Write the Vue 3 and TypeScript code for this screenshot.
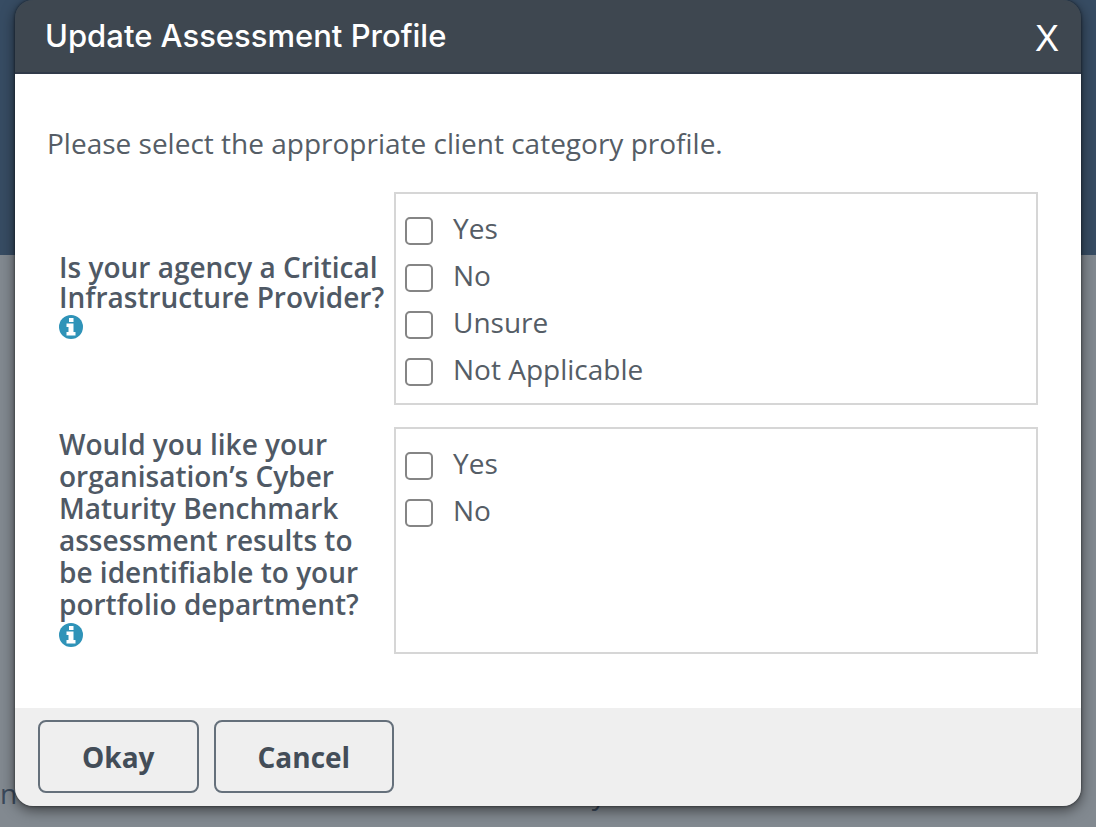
<script setup lang="ts">
import { reactive } from 'vue'

interface Question {
  id: string
  label: string
  options: string[]
  tight: boolean
}

const questions: Question[] = [
  {
    id: 'infrastructure',
    label: 'Is your agency a Critical Infrastructure Provider?',
    options: ['Yes', 'No', 'Unsure', 'Not Applicable'],
    tight: true,
  },
  {
    id: 'identifiable',
    label:
      'Would you like your organisation’s Cyber Maturity Benchmark assessment results to be identifiable to your portfolio department?',
    options: ['Yes', 'No'],
    tight: false,
  },
]

const answers = reactive<Record<string, string[]>>({
  infrastructure: [],
  identifiable: [],
})
</script>

<template>
  <div class="page">
    <div class="banner"></div>
    <p class="page-text"><span>n</span><span>y</span></p>

    <form class="dialog" role="dialog" aria-labelledby="dialog-title" @submit.prevent>
      <header class="head">
        <h1 id="dialog-title" class="title">Update Assessment Profile</h1>
        <button type="button" class="close">X</button>
      </header>

      <main class="body">
        <p class="intro">Please select the appropriate client category profile.</p>
        <div class="questions">
          <div
            v-for="q in questions"
            :key="q.id"
            class="question"
            role="group"
            :aria-labelledby="`label-${q.id}`"
          >
            <div class="prompt" :class="{ tight: q.tight }">
              <span :id="`label-${q.id}`">{{ q.label }}</span>
              <button type="button" class="info" :aria-describedby="`label-${q.id}`">
                <svg viewBox="0 0 24 24" width="24" height="24" aria-hidden="true">
                  <circle cx="12" cy="12" r="12" fill="#2f93b8" />
                  <path
                    d="M10 3h4.5v4H10zM7.5 8.5h7V17h2v3.5h-9V17h2v-5h-2z"
                    fill="#fff"
                  />
                </svg>
              </button>
            </div>
            <div class="options">
              <label v-for="option in q.options" :key="option" class="option">
                <input v-model="answers[q.id]" type="checkbox" :value="option" class="check" />
                <span>{{ option }}</span>
              </label>
            </div>
          </div>
        </div>
      </main>

      <footer class="foot">
        <button type="submit" class="action">Okay</button>
        <button type="button" class="action">Cancel</button>
      </footer>
    </form>
  </div>
</template>

<style>
body {
  margin: 0;
  background: #828990;
}
</style>

<style scoped>
.page {
  position: relative;
  box-sizing: border-box;
  min-height: 100vh;
  padding: 0 15px 20px;
  overflow: hidden;
  background: #828990;
  font-family: 'Open Sans', 'Noto Sans', sans-serif;
  font-size: 28px;
  color: #555d66;
}
.banner {
  position: absolute;
  inset: 0 0 auto;
  height: 255px;
  background: #374c63;
}
.page-text {
  position: absolute;
  left: 0;
  right: 0;
  bottom: 15px;
  display: grid;
  grid-template-columns: 54% 1fr;
  margin: 0;
  line-height: 38px;
  color: #3a485a;
}
.dialog {
  position: relative;
  overflow: hidden;
  border-radius: 18px;
  box-shadow: 0 4px 14px rgba(0, 0, 0, 0.55), 0 0 3px rgba(0, 0, 0, 0.6);
}
.head {
  display: flex;
  align-items: center;
  justify-content: space-between;
  box-sizing: border-box;
  height: 74px;
  padding: 0 22px 0 30px;
  border-bottom: 2px solid #313a49;
  background: #3e4750;
  color: #fff;
}
.title {
  margin: 0;
  font-family: Inter, 'Open Sans', sans-serif;
  font-size: 31px;
  font-weight: 500;
  line-height: 40px;
}
.close {
  padding: 6px 0 0;
  border: 0;
  background: none;
  color: #fff;
  font-family: 'Liberation Sans', Arial, sans-serif;
  font-size: 36px;
  line-height: 40px;
}
.body {
  padding: 50px 43px 54px 32px;
  background: #fff;
}
.intro {
  margin: 0 0 30px;
  line-height: 38px;
}
.questions {
  display: flex;
  flex-direction: column;
  gap: 22px;
  padding-left: 12px;
}
.question {
  display: grid;
  grid-template-columns: 335px 1fr;
}
.prompt {
  align-self: center;
  padding: 0 8px 4px 0;
  font-weight: 600;
  line-height: 32px;
  color: #4f5965;
}
.prompt.tight {
  line-height: 30px;
}
.info {
  display: block;
  height: 30px;
  padding: 3px 0;
  border: 0;
  background: none;
}
.info svg {
  display: block;
}
.options {
  box-sizing: border-box;
  min-height: 227px;
  padding: 13px 9px 8px;
  border: 2px solid #d6d6d6;
}
.question:first-child .options {
  min-height: 0;
}
.option {
  display: flex;
  align-items: center;
  gap: 20px;
  height: 47px;
}
.option span {
  line-height: 36px;
  padding-bottom: 5px;
}
.check {
  appearance: none;
  flex: none;
  box-sizing: border-box;
  width: 28px;
  height: 28px;
  margin: 0;
  border: 2px solid #858585;
  border-radius: 5px;
  background: #fff;
}
.check:checked {
  background: #2f93b8;
}
.foot {
  display: flex;
  gap: 15px;
  padding: 12px 23px 13px;
  background: #efefef;
}
.action {
  box-sizing: border-box;
  height: 73px;
  padding: 0 42px;
  border: 2px solid #65707b;
  border-radius: 8px;
  background: none;
  color: #434d58;
  font-family: inherit;
  font-size: 28px;
  font-weight: 700;
}
</style>
